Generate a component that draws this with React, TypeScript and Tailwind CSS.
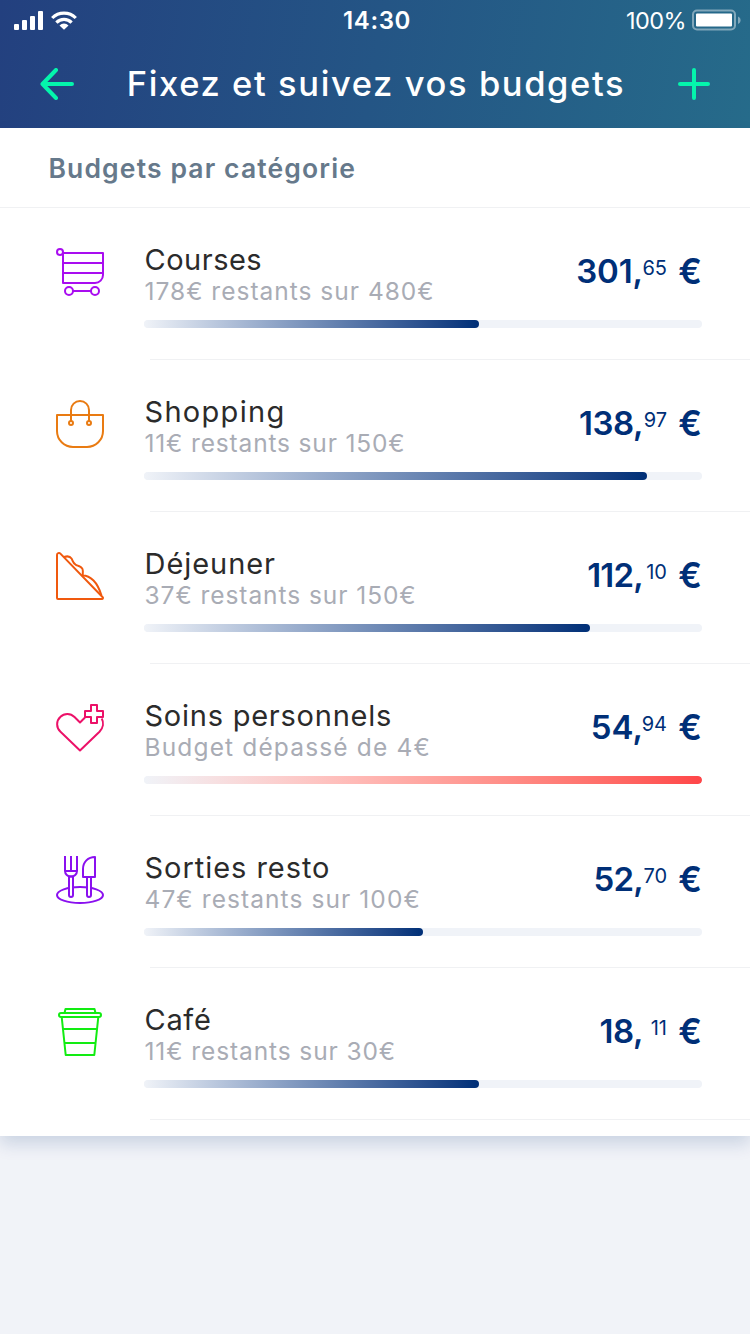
import type { ReactNode } from "react";

type Budget = {
  name: string;
  nameTracking: string;
  detail: string;
  detailTracking: string;
  whole: string;
  wholeTracking: string;
  cents: string;
  fill: number;
  over?: boolean;
  color: string;
  icon: ReactNode;
};

const budgets: Budget[] = [
  {
    name: "Courses",
    nameTracking: "tracking-[0.5px]",
    detail: "178€ restants sur 480€",
    detailTracking: "tracking-[1px]",
    whole: "301,",
    wholeTracking: "tracking-[-0.1px]",
    cents: "65",
    fill: 335,
    color: "text-[#a90df0]",
    icon: (
      <>
        <circle cx="4" cy="4" r="3" />
        <path d="M7 5H47V27a8 8 0 0 1-8 8H7ZM7 15H47M7 25H47M17 43H35" />
        <circle cx="13" cy="43" r="4" />
        <circle cx="39" cy="43" r="4" />
      </>
    ),
  },
  {
    name: "Shopping",
    nameTracking: "tracking-[1.3px]",
    detail: "11€ restants sur 150€",
    detailTracking: "tracking-[0.84px]",
    whole: "138,",
    wholeTracking: "tracking-[-0.5px]",
    cents: "97",
    fill: 503,
    color: "text-[#e97b12]",
    icon: (
      <>
        <path d="M1 15H47V31a16 16 0 0 1-16 16H17A16 16 0 0 1 1 31Z" />
        <path d="M15 21V10a9 9 0 0 1 18 0V21" />
        <circle cx="15" cy="23" r="2" />
        <circle cx="33" cy="23" r="2" />
      </>
    ),
  },
  {
    name: "Déjeuner",
    nameTracking: "tracking-[0.95px]",
    detail: "37€ restants sur 150€",
    detailTracking: "tracking-[0.94px]",
    whole: "112,",
    wholeTracking: "tracking-[-0.8px]",
    cents: "10",
    fill: 446,
    color: "text-[#f0590e]",
    icon: (
      <>
        <path d="M1 3a2 2 0 0 1 3.4-1.4L46.7 45.3a1 1 0 0 1-.7 1.7H2a1 1 0 0 1-1-1Z" />
        <path d="M8 5C11 4 14 4.200 15.500 6.500C17 9 16.500 11 20 13C23 14 25.500 14.500 26.500 17C27.300 19 27 21 26.700 23.500C31 23.500 34 25 37.500 28.500C41.500 32.500 43.500 37 45.500 43.500" />
      </>
    ),
  },
  {
    name: "Soins personnels",
    nameTracking: "tracking-[0.76px]",
    detail: "Budget dépassé de 4€",
    detailTracking: "tracking-[1.15px]",
    whole: "54,",
    wholeTracking: "tracking-[0px]",
    cents: "94",
    fill: 558,
    over: true,
    color: "text-[#ec1168]",
    icon: (
      <>
        <path d="M29 13.500L24 18.500L18.500 13C14.500 9 8.300 9 4.500 12.800C0 17 0 23.500 4.500 27.700L24 46.500L43.500 27.700C47.300 23.800 48 18.500 45.700 14.500" />
        <path d="M35 1h6v6h6v6h-6v6h-6v-6h-6v-6h6z" />
      </>
    ),
  },
  {
    name: "Sorties resto",
    nameTracking: "tracking-[0.96px]",
    detail: "47€ restants sur 100€",
    detailTracking: "tracking-[1.08px]",
    whole: "52,",
    wholeTracking: "tracking-[-0.8px]",
    cents: "70",
    fill: 279,
    color: "text-[#8a10ef]",
    icon: (
      <>
        <ellipse cx="24" cy="39" rx="23" ry="8" />
        <path d="M13 20.500H17V39a2 2 0 0 1-4 0ZM31 21H35V39a2 2 0 0 1-4 0Z" fill="white" />
        <path d="M9 0V15a6 5.500 0 0 0 12 0V0M15 0V15M9 15H21" />
        <path d="M39 1V21H27V13C27 6 32 1 39 1Z" />
      </>
    ),
  },
  {
    name: "Café",
    nameTracking: "tracking-[0.7px]",
    detail: "11€ restants sur 30€",
    detailTracking: "tracking-[0.9px]",
    whole: "18,",
    wholeTracking: "tracking-[-0.5px]",
    cents: "11",
    fill: 335,
    color: "text-[#12ec12]",
    icon: (
      <>
        <path d="M8.500 5L9.500 1H38.500L39.500 5" />
        <rect x="3" y="5" width="42" height="4" rx="2" />
        <path d="M5.700 9L9.700 47H38.300L42.300 9M7 21H41M8.500 35H39.500" />
      </>
    ),
  },
];

function StatusBar() {
  return (
    <div className="flex h-10 items-center pl-3.5 pr-2">
      <div className="flex w-[300px] items-center gap-2">
        <svg width="29" height="19" viewBox="0 0 29 19" fill="currentColor">
          <rect x="0" y="13" width="5" height="6" rx="1" />
          <rect x="8" y="9" width="5" height="10" rx="1" />
          <rect x="16" y="5" width="5" height="14" rx="1" />
          <rect x="24" y="0" width="5" height="19" rx="1" />
        </svg>
        <svg width="26" height="19" viewBox="0 0 26 19" fill="none" stroke="currentColor" strokeWidth="3.2">
          <path d="M1.200 7A16.500 16.500 0 0 1 24.800 7" />
          <path d="M5.400 11.600A10.500 10.500 0 0 1 20.600 11.600" />
          <path d="M13 18.800L8.500 14.500A6.300 6.300 0 0 1 17.500 14.500Z" fill="currentColor" stroke="none" />
        </svg>
      </div>
      <div className="w-[126px] pt-0.5 text-center text-[24px] font-semibold tracking-[0.6px]">14:30</div>
      <div className="flex flex-1 items-center justify-end gap-1.5">
        <span className="pt-0.5 text-[23.5px] tracking-[-0.6px]">100%</span>
        <svg width="50" height="22" viewBox="0 0 50 22" fill="none">
          <rect x="1" y="1.500" width="42" height="19" rx="4" stroke="currentColor" strokeWidth="2" opacity="0.42" />
          <rect x="4" y="4.500" width="36" height="13" rx="1" fill="currentColor" />
          <path d="M46 7.500c3.500 1.500 3.500 6 0 7.500Z" fill="currentColor" opacity="0.42" />
        </svg>
      </div>
    </div>
  );
}

function Header() {
  return (
    <header className="h-32 bg-[linear-gradient(100deg,#23407f_0%,#245585_50%,#266b8a_100%)] text-white">
      <StatusBar />
      <div className="flex h-[88px] items-center justify-between pl-10 pr-10">
        <svg width="34" height="32" viewBox="0 0 34 32" fill="none" stroke="#04f5ac" strokeWidth="4" strokeLinecap="round" strokeLinejoin="round">
          <path d="M2.500 16H32M16 2L2.500 16L16 30" />
        </svg>
        <h1 className="whitespace-nowrap text-[34.5px] font-medium leading-10 tracking-[1.6px]">Fixez et suivez vos budgets</h1>
        <svg width="32" height="32" viewBox="0 0 32 32" fill="none" stroke="#04f5ac" strokeWidth="4" strokeLinecap="round">
          <path d="M16 2V30M2 16H30" />
        </svg>
      </div>
    </header>
  );
}

function BudgetRow({ budget }: { budget: Budget }) {
  return (
    <li className="flex h-[152px] flex-col">
      <div className="flex flex-1 pl-14 pr-12">
        <svg width="48" height="48" viewBox="0 0 48 48" fill="none" stroke="currentColor" strokeWidth="2" strokeLinejoin="round" className={"mt-10 shrink-0 overflow-visible " + budget.color}>
          {budget.icon}
        </svg>
        <div className="ml-10 flex-1 pt-9">
          <div className="flex h-[61px] justify-between whitespace-nowrap">
            <div className="pl-[0.5px]">
              <h2 className={"text-[29px] leading-8 text-[#2b2b2b] " + budget.nameTracking}>{budget.name}</h2>
              <p className={"pt-px text-[24.5px] leading-7 text-[#a9acb5] " + budget.detailTracking}>{budget.detail}</p>
            </div>
            <div className="flex pt-[7px] leading-10 text-[#002f77]">
              <span className={"-mr-0.5 text-[33px] font-semibold " + budget.wholeTracking}>{budget.whole}</span>
              <span className="w-[26px] -translate-y-[3px] text-right text-[20px]">{budget.cents}</span>
              <span className="w-[35px] text-right text-[35px] font-semibold">€</span>
            </div>
          </div>
          <div className="mt-[15px] h-2 overflow-hidden rounded-full bg-[#f0f3f8]">
            <div
              className={"h-2 rounded-full bg-linear-to-r " + (budget.over ? "from-[#f0f3f8] to-[#ff4548]" : "from-[#f0f3f8] to-[#002f77]")}
              style={{ width: budget.fill }}
            />
          </div>
        </div>
      </div>
      <div className="ml-[150px] h-px bg-[#f0f1f3]" />
    </li>
  );
}

export default function App() {
  return (
    <div className="h-[1334px] w-[750px] overflow-hidden bg-[#f1f3f8] font-['Inter','Liberation_Sans',sans-serif]">
      <Header />
      <main className="h-[1008px] bg-white shadow-[0_8px_16px_rgba(0,47,119,0.16)]">
        <div className="flex h-20 items-center border-b border-[#f0f1f3] pl-[48.5px] pt-[3px]">
          <h2 className="text-[26.5px] font-semibold tracking-[1.13px] text-[#66798b]">Budgets par catégorie</h2>
        </div>
        <ul>
          {budgets.map((budget) => (
            <BudgetRow key={budget.name} budget={budget} />
          ))}
        </ul>
      </main>
    </div>
  );
}
